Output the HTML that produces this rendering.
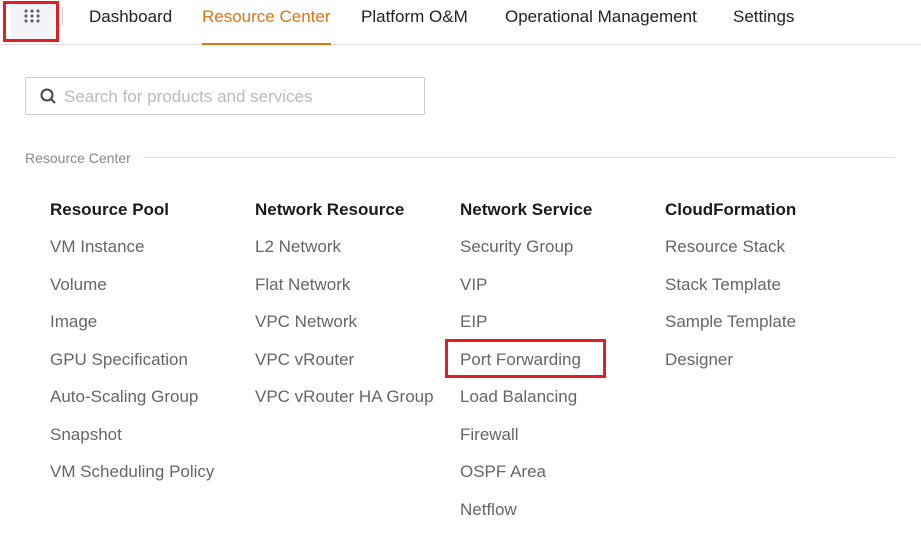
<!DOCTYPE html>
<html><head><meta charset="utf-8"><style>
*{margin:0;padding:0;box-sizing:border-box}
body{width:921px;height:545px;background:#fff;font-family:"Liberation Sans",sans-serif;position:relative;overflow:hidden;color:#555}
.a{position:absolute;white-space:nowrap}
.nav{font-size:17px;color:#222;top:7px}
.h{font-size:17px;font-weight:bold;color:#1a1a1a}
.i{font-size:17px;color:#666}
</style></head><body>
<div class="a" style="left:11px;top:2px;width:43px;height:38px;background:#f3f4f8"></div>
<svg class="a" style="left:24px;top:9px" width="16" height="14" viewBox="0 0 16 14" fill="#555">
<circle cx="2" cy="2" r="1.5"/><circle cx="8" cy="2" r="1.5"/><circle cx="14" cy="2" r="1.5"/>
<circle cx="2" cy="7" r="1.5"/><circle cx="8" cy="7" r="1.5"/><circle cx="14" cy="7" r="1.5"/>
<circle cx="2" cy="12" r="1.5"/><circle cx="8" cy="12" r="1.5"/><circle cx="14" cy="12" r="1.5"/></svg>
<div class="a" style="left:3px;top:1px;width:56px;height:41px;border:3px solid #e51c23"></div>
<div class="a" style="left:62px;top:7px;width:1px;height:18px;background:#ccc"></div>
<div class="a nav" style="left:89px">Dashboard</div>
<div class="a nav" style="left:202px;color:#e0740e">Resource Center</div>
<div class="a nav" style="left:361px">Platform O&amp;M</div>
<div class="a nav" style="left:505px">Operational Management</div>
<div class="a nav" style="left:733px">Settings</div>
<div class="a" style="left:0;top:44px;width:921px;height:1px;background:#ddd"></div>
<div class="a" style="left:202px;top:43px;width:129px;height:2px;background:#e0740e"></div>
<div class="a" style="left:25px;top:77px;width:400px;height:38px;border:1px solid #ccc;border-radius:2px"></div>
<svg class="a" style="left:40px;top:88px" width="17" height="17" viewBox="0 0 17 17" fill="none" stroke="#444" stroke-width="2"><circle cx="7" cy="7" r="5.5"/><path d="M11 11l4 4"/></svg>
<div class="a" style="left:64px;top:87px;font-size:17px;color:#bbb">Search for products and services</div>
<div class="a" style="left:25px;top:150px;font-size:14px;color:#888">Resource Center</div>
<div class="a" style="left:143px;top:157px;width:752px;height:1px;background:#ddd"></div>
<div class="a h" style="left:50px;top:200px">Resource Pool</div>
<div class="a h" style="left:255px;top:200px">Network Resource</div>
<div class="a h" style="left:460px;top:200px">Network Service</div>
<div class="a h" style="left:665px;top:200px">CloudFormation</div>
<div class="a i" style="left:50px;top:228px;line-height:37.5px">VM Instance<br>Volume<br>Image<br>GPU Specification<br>Auto-Scaling Group<br>Snapshot<br>VM Scheduling Policy</div>
<div class="a i" style="left:255px;top:228px;line-height:37.5px">L2 Network<br>Flat Network<br>VPC Network<br>VPC vRouter<br>VPC vRouter HA Group</div>
<div class="a i" style="left:460px;top:228px;line-height:37.5px">Security Group<br>VIP<br>EIP<br>Port Forwarding<br>Load Balancing<br>Firewall<br>OSPF Area<br>Netflow</div>
<div class="a i" style="left:665px;top:228px;line-height:37.5px">Resource Stack<br>Stack Template<br>Sample Template<br>Designer</div>
<div class="a" style="left:445px;top:339px;width:161px;height:39px;border:3px solid #e51c23"></div>
</body></html>
